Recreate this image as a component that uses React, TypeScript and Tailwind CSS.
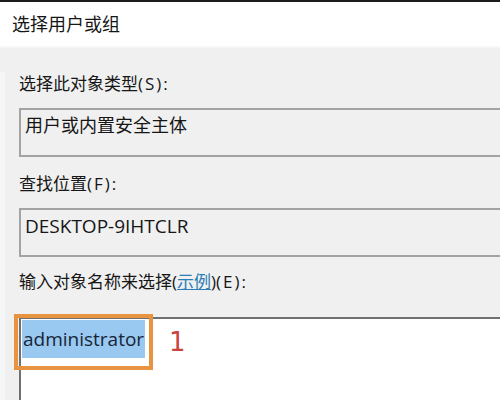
export default function App() {
  return (
    <div className="w-[500px] h-[400px] overflow-hidden bg-[#f0f0f0] border-t-2 border-[#1c1c1c] font-['Open_Sans','Noto_Sans_CJK_SC',sans-serif] text-[#161616]">
      {/* title bar */}
      <div className="h-[44px] bg-white pl-[12px] flex items-center text-[18px]">
        选择用户或组
      </div>
      <div className="h-[3px] bg-gradient-to-b from-[#fafafa] to-[#f0f0f0]" />

      <div className="-mt-[3px] border-l-[5px] border-[#f4f6f8] pl-[14px] -mr-[10px]">
        <p className="mt-[26px] text-[17px] leading-[24px]">
          选择此对象类型<span className="tracking-[2px]">(S):</span>
        </p>
        <div className="mt-[12px] h-[49px] border-2 border-[#a3a3a3] px-[4px] pt-[3px] text-[18px] leading-[24px]">
          用户或内置安全主体
        </div>

        <p className="mt-[15px] text-[17px] leading-[24px]">
          查找位置<span className="tracking-[2px]">(F):</span>
        </p>
        <div className="mt-[12px] h-[49px] border-2 border-[#a3a3a3] px-[4px] pt-[4px] text-[19px] leading-[24px]">
          DESKTOP-9IHTCLR
        </div>

        <p className="mt-[13px] text-[17px] leading-[24px]">
          输入对象名称来选择(<span className="text-[#2a7db5] underline">示例</span>)
          <span className="tracking-[2px]">(E):</span>
        </p>
        <div className="relative mt-[23px] h-[120px] bg-white border-l-2 border-t-2 border-[#707070]">
          <span className="inline-block ml-[1px] mt-[1px] h-[38px] px-[1px] leading-[38px] text-[19px] bg-[#99c8f0] text-[#172536]">
            administrator
          </span>
          {/* annotation */}
          <div className="absolute -left-[7px] -top-[5px] w-[139px] h-[56px] border-4 border-[#e8933f]" />
          <span className="absolute left-[148px] top-[10px] font-['DejaVu_Sans',sans-serif] text-[26px] leading-none text-[#c8443c]">
            1
          </span>
        </div>
      </div>
    </div>
  );
}
